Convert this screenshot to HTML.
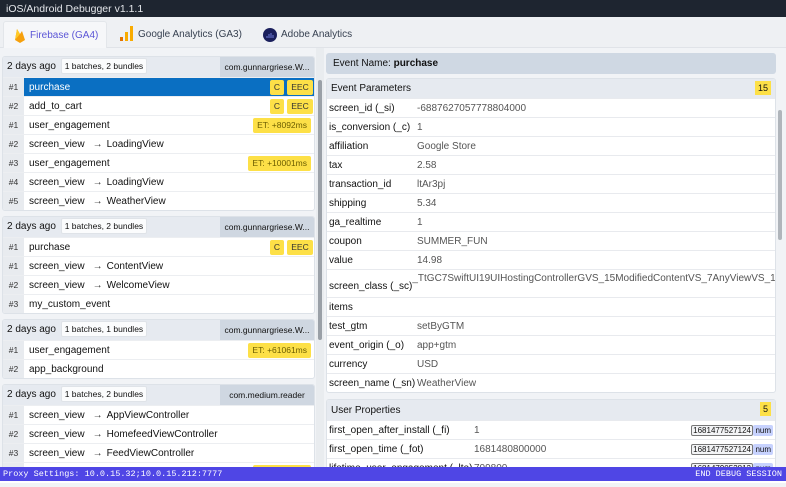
<!DOCTYPE html>
<html><head><meta charset="utf-8"><style>
*{box-sizing:border-box;margin:0;padding:0}
body{width:786px;height:483px;overflow:hidden;background:#f1f3f6;font-family:"Liberation Sans",Arial,sans-serif;font-size:10px;color:#111;position:relative}
.title{position:absolute;left:0;top:0;width:786px;height:17px;background:#1e2530;color:#e5e7eb;font-size:10.5px;padding:3px 6px}
.tabs{position:absolute;left:0;top:17px;width:786px;height:31px;background:#eef0f3;border-bottom:1px solid #e0e3e8}
.tab{position:absolute;top:4px;height:27px;font-size:10px;color:#374151;padding-top:8px}
.tab.active{left:3px;width:104px;background:#f6f7f9;border:1px solid #e3e6ea;border-bottom:none;border-radius:3px 3px 0 0;color:#5b55d6;padding-left:26px}
.left{position:absolute;left:2px;top:56px;width:313px}
.grp{background:#fff;border:1px solid #dde2e8;border-radius:3px;margin-bottom:5px;overflow:hidden}
.gh{height:20px;background:#e6eaf0;position:relative;font-size:10px;line-height:20px;padding:0 4px}
.gh .b{display:inline-block;background:#fbfcfd;border:1px solid #dfe3e8;border-radius:2px;font-size:8.5px;line-height:12px;padding:1px 3px;margin-left:2px;vertical-align:middle}
.gh .id{position:absolute;right:0;top:0;width:94px;height:20px;background:#cfd7e1;font-size:8.5px;text-align:center;line-height:20px}
.r{height:19px;position:relative;border-top:1px solid #eceef1;display:flex;align-items:stretch}
.r .n{width:21px;background:#e8ebef;font-size:8.5px;color:#333;display:flex;align-items:center;justify-content:center}
.r .e{flex:1;padding:0 5px;font-size:10px;display:flex;align-items:center}
.r.sel .e{background:#0a6fc2;color:#fff}
.tg{position:absolute;top:2px;height:15px;line-height:15px;background:#fde047;border-radius:2px;font-size:8.5px;padding:0 4px;color:#333;text-align:center}
.c{right:30px;width:14px;padding:0}
.x{right:1px;width:26px;padding:0}
.et{color:#6b5d00}
.arr{color:#333;margin:0 4px 0 8px}
.sb{position:absolute;left:316px;top:48px;width:8px;height:419px;background:#e9ecef}
.sb i{position:absolute;left:2px;top:32px;width:4px;height:260px;background:#9aa0a7;border-radius:2px}
.right{position:absolute;left:326px;top:53px;width:450px}
.evn{height:21px;background:#cfd8e3;border-radius:3px;padding:5px 7px;font-size:10px}
.box{margin-top:4px;background:#fff;border:1px solid #dde2e8;border-radius:3px;overflow:hidden}
.bh{height:19px;background:#e6eaf0;padding:4px 4px;position:relative}
.cnt{position:absolute;right:4px;top:2px;background:#fde047;font-size:9px;padding:2px 3px}
.p{height:19px;border-top:1px solid #e8eaee;display:flex;align-items:center;padding-left:2px;position:relative}
.p .k{width:88px;white-space:nowrap}
.p .v{color:#555;white-space:nowrap;overflow:hidden}
.u .k{width:145px;overflow:hidden}
.ts{position:absolute;right:22px;border:1px solid #777;border-radius:2px;font-size:8px;padding:0 1px;background:#f3f4f6}
.num{position:absolute;right:2px;background:#c7d2fe;font-size:8px;padding:1px 2px;border-radius:2px}
.sb2{position:absolute;left:777px;top:60px;width:6px;height:405px}
.sb2 i{position:absolute;left:1px;top:50px;width:4px;height:130px;background:#b0b5bb;border-radius:2px}
.foot{position:absolute;left:0;top:467px;width:786px;height:14px;background:#4f46e5;color:#fff;font-family:"Liberation Mono",monospace;font-size:8.5px;padding:2px 3px}
.foot span{position:absolute;right:4px;top:2px}
.bot{position:absolute;left:0;top:481px;width:786px;height:2px;background:#fff}
</style></head><body>
<div class="title">iOS/Android Debugger v1.1.1</div>
<div class="tabs">
 <div class="tab active"><svg style="position:absolute;left:10px;top:5px" width="12" height="17" viewBox="0 0 12 17"><path d="M1 13 L3 2 L6 7 L8 4 L11 13 L6 16Z" fill="#f6a00c"/><path d="M1 13 L3 2 L6 7Z" fill="#ffca28"/></svg>Firebase (GA4)</div>
 <div class="tab" style="left:120px;padding-left:18px"><svg style="position:absolute;left:0;top:5px" width="14" height="16"><rect x="0" y="11" width="3" height="4" fill="#e37400"/><rect x="5" y="6" width="3" height="9" fill="#f9ab00"/><rect x="10" y="0" width="3" height="15" fill="#f9ab00"/></svg>Google Analytics (GA3)</div>
 <div class="tab" style="left:263px;padding-left:18px"><svg style="position:absolute;left:0;top:7px" width="14" height="14"><circle cx="7" cy="7" r="7" fill="#1a1f5c"/><path d="M4 10V8M6 10V6M8 10V5M10 10V7" stroke="#6d7bd8" stroke-width="1"/></svg>Adobe Analytics</div>
</div>
<div class="left">
 <div class="grp"><div class="gh">2 days ago <span class="b">1 batches, 2 bundles</span><div class="id">com.gunnargriese.W...</div></div>
  <div class="r sel"><div class="n">#1</div><div class="e">purchase</div><span class="tg c">C</span><span class="tg x">EEC</span></div>
  <div class="r"><div class="n">#2</div><div class="e">add_to_cart</div><span class="tg c">C</span><span class="tg x">EEC</span></div>
  <div class="r"><div class="n">#1</div><div class="e">user_engagement</div><span class="tg et" style="right:3px">ET: +8092ms</span></div>
  <div class="r"><div class="n">#2</div><div class="e">screen_view <span class="arr">→</span> LoadingView</div></div>
  <div class="r"><div class="n">#3</div><div class="e">user_engagement</div><span class="tg et" style="right:3px">ET: +10001ms</span></div>
  <div class="r"><div class="n">#4</div><div class="e">screen_view <span class="arr">→</span> LoadingView</div></div>
  <div class="r"><div class="n">#5</div><div class="e">screen_view <span class="arr">→</span> WeatherView</div></div>
 </div>
 <div class="grp"><div class="gh">2 days ago <span class="b">1 batches, 2 bundles</span><div class="id">com.gunnargriese.W...</div></div>
  <div class="r"><div class="n">#1</div><div class="e">purchase</div><span class="tg c">C</span><span class="tg x">EEC</span></div>
  <div class="r"><div class="n">#1</div><div class="e">screen_view <span class="arr">→</span> ContentView</div></div>
  <div class="r"><div class="n">#2</div><div class="e">screen_view <span class="arr">→</span> WelcomeView</div></div>
  <div class="r"><div class="n">#3</div><div class="e">my_custom_event</div></div>
 </div>
 <div class="grp"><div class="gh">2 days ago <span class="b">1 batches, 1 bundles</span><div class="id">com.gunnargriese.W...</div></div>
  <div class="r"><div class="n">#1</div><div class="e">user_engagement</div><span class="tg et" style="right:3px">ET: +61061ms</span></div>
  <div class="r"><div class="n">#2</div><div class="e">app_background</div></div>
 </div>
 <div class="grp"><div class="gh">2 days ago <span class="b">1 batches, 2 bundles</span><div class="id">com.medium.reader</div></div>
  <div class="r"><div class="n">#1</div><div class="e">screen_view <span class="arr">→</span> AppViewController</div></div>
  <div class="r"><div class="n">#2</div><div class="e">screen_view <span class="arr">→</span> HomefeedViewController</div></div>
  <div class="r"><div class="n">#3</div><div class="e">screen_view <span class="arr">→</span> FeedViewController</div></div>
  <div class="r"><div class="n">#4</div><div class="e"></div><span class="tg et" style="right:3px">ET: +1000ms</span></div>
 </div>
</div>
<div class="sb"><i></i></div>
<div class="right">
 <div class="evn">Event Name: <b>purchase</b></div>
 <div class="box"><div class="bh">Event Parameters<span class="cnt">15</span></div>
  <div class="p"><span class="k">screen_id (_si)</span><span class="v">-6887627057778804000</span></div>
  <div class="p"><span class="k">is_conversion (_c)</span><span class="v">1</span></div>
  <div class="p"><span class="k">affiliation</span><span class="v">Google Store</span></div>
  <div class="p"><span class="k">tax</span><span class="v">2.58</span></div>
  <div class="p"><span class="k">transaction_id</span><span class="v">ltAr3pj</span></div>
  <div class="p"><span class="k">shipping</span><span class="v">5.34</span></div>
  <div class="p"><span class="k">ga_realtime</span><span class="v">1</span></div>
  <div class="p"><span class="k">coupon</span><span class="v">SUMMER_FUN</span></div>
  <div class="p"><span class="k">value</span><span class="v">14.98</span></div>
  <div class="p" style="height:28px;align-items:flex-start;padding-top:3px"><span class="k" style="padding-top:8px">screen_class (_sc)</span><span class="v">_TtGC7SwiftUI19UIHostingControllerGVS_15ModifiedContentVS_7AnyViewVS_12RootModifier_</span></div>
  <div class="p"><span class="k">items</span><span class="v"></span></div>
  <div class="p"><span class="k">test_gtm</span><span class="v">setByGTM</span></div>
  <div class="p"><span class="k">event_origin (_o)</span><span class="v">app+gtm</span></div>
  <div class="p"><span class="k">currency</span><span class="v">USD</span></div>
  <div class="p"><span class="k">screen_name (_sn)</span><span class="v">WeatherView</span></div>
 </div>
 <div class="box" style="margin-top:6px"><div class="bh" style="height:20px;padding-top:5px">User Properties<span class="cnt">5</span></div>
  <div class="p u"><span class="k">first_open_after_install (_fi)</span><span class="v">1</span><span class="ts">1681477527124</span><span class="num">num</span></div>
  <div class="p u"><span class="k">first_open_time (_fot)</span><span class="v">1681480800000</span><span class="ts">1681477527124</span><span class="num">num</span></div>
  <div class="p u"><span class="k">lifetime_user_engagement (_lte)</span><span class="v">709800</span><span class="ts">1681479053812</span><span class="num">num</span></div>
 </div>
</div>
<div class="sb2"><i></i></div>
<div class="foot">Proxy Settings: 10.0.15.32;10.0.15.212:7777<span>END DEBUG SESSION</span></div>
<div class="bot"></div>
</body></html>
